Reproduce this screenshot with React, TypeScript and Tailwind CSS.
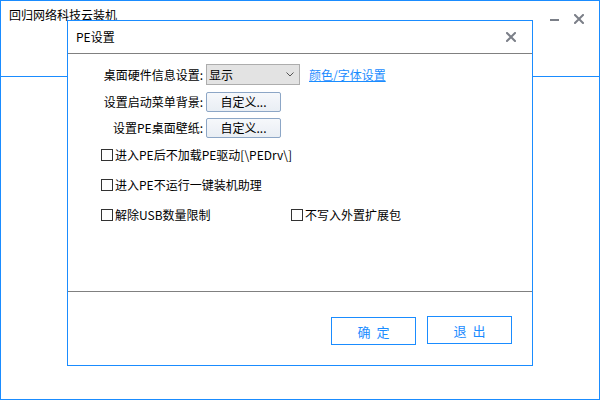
import React from "react";

const font = "font-['Noto_Sans_CJK_SC','Noto_Sans',sans-serif]";

function CloseIcon({ size = 10 }: { size?: number }) {
  return (
    <svg width={size} height={size} viewBox="0 0 10 10">
      <path d="M1 1 L9 9 M9 1 L1 9" stroke="#7b7f88" strokeWidth="2" strokeLinecap="square" />
    </svg>
  );
}

function Check({ label }: { label: string }) {
  return (
    <div className="flex items-center">
      <span className="mr-[2px] h-[12px] w-[12px] border border-[#333]" />
      <span className="text-[12px] leading-none text-black">{label}</span>
    </div>
  );
}

function SmallButton({ children }: { children: React.ReactNode }) {
  return (
    <button className="flex h-[20px] w-[75px] items-center justify-center rounded-[2px] border border-[#8ca6c6] bg-gradient-to-b from-[#f6f8fb] to-[#e9eef4] text-[12px] leading-none text-black">
      {children}
    </button>
  );
}

function FooterButton({ chars, className = "" }: { chars: string[]; className?: string }) {
  return (
    <button
      className={`flex h-[28px] w-[85px] items-center justify-center gap-[6px] border border-[#1a8cff] text-[13px] leading-none text-[#1a8cff] ${className}`}
    >
      {chars.map((c) => (
        <span key={c}>{c}</span>
      ))}
    </button>
  );
}

function Row({ label, children }: { label: string; children: React.ReactNode }) {
  return (
    <div className="flex items-center">
      <span className="w-[135px] text-right text-[12px] leading-none text-black">{label}</span>
      <div className="ml-[3px] flex items-center">{children}</div>
    </div>
  );
}

export default function App() {
  return (
    <div className={`relative h-[400px] w-[600px] overflow-hidden border border-[#1a8cff] bg-white ${font}`}>
      <div className="flex h-[76px] items-start justify-between border-b border-[#1a8cff]">
        <span className="ml-[8px] mt-[8px] text-[12px] leading-none text-black">回归网络科技云装机</span>
        <div className="mr-[15px] mt-[13px] flex items-center gap-[15px]">
          <span className="mt-[1px] h-[2px] w-[9px] bg-[#7b7f88]" />
          <CloseIcon />
        </div>
      </div>

      <div className="absolute left-[66px] top-[19px] flex h-[346px] w-[466px] flex-col border border-[#1a8cff] bg-white">
        <div className="flex h-[33px] items-center justify-between border-b border-[#808080] pl-[8px] pr-[16px]">
          <span className="text-[12px] leading-none text-black">PE设置</span>
          <CloseIcon />
        </div>

        <div className="h-[238px] border-b border-[#808080] pt-[10px]">
          <Row label="桌面硬件信息设置:">
            <div className="flex h-[21px] w-[94px] items-center justify-between border border-[#adadad] bg-[#e3e3e3] pl-[2px] pr-[5px]">
              <span className="text-[12px] leading-none text-black">显示</span>
              <svg width="8" height="5" viewBox="0 0 8 5">
                <path d="M0.5 0.5 L4 4 L7.5 0.5" stroke="#555" strokeWidth="1" fill="none" />
              </svg>
            </div>
            <span className="ml-[9px] text-[12px] leading-none text-[#1a8cff] underline">颜色/字体设置</span>
          </Row>
          <div className="mt-[7px]">
            <Row label="设置启动菜单背景:">
              <SmallButton>自定义...</SmallButton>
            </Row>
          </div>
          <div className="mt-[6px]">
            <Row label="设置PE桌面壁纸:">
              <SmallButton>自定义...</SmallButton>
            </Row>
          </div>

          <div className="mt-[11px] flex flex-col gap-[18px] pl-[33px]">
            <Check label="进入PE后不加载PE驱动[\PEDrv\]" />
            <Check label="进入PE不运行一键装机助理" />
            <div className="flex">
              <div className="w-[190px]">
                <Check label="解除USB数量限制" />
              </div>
              <Check label="不写入外置扩展包" />
            </div>
          </div>
        </div>

        <div className="flex flex-1 items-start justify-end gap-[11px] pr-[20px] pt-[24px]">
          <FooterButton chars={["确", "定"]} className="mt-[1px]" />
          <FooterButton chars={["退", "出"]} />
        </div>
      </div>
    </div>
  );
}
